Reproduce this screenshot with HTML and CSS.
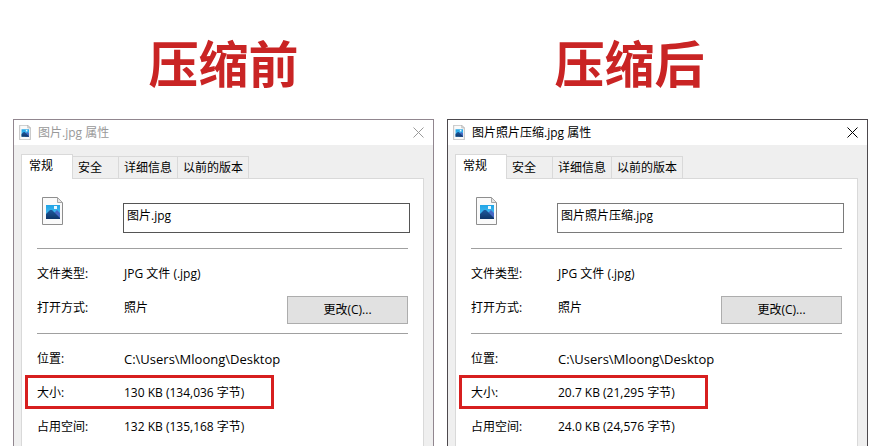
FILE: index.html
```html
<!DOCTYPE html>
<html lang="zh-CN">

<head>
    <meta charset="UTF-8">
    <meta name="viewport" content="width=device-width, initial-scale=1.0">
    <title>压缩前 / 压缩后</title>
    <link rel="stylesheet" href="styles.css">
</head>

<body>
    <!-- shared icons -->
    <svg class="sprite" aria-hidden="true">
        <defs>
            <linearGradient id="sky" x1="0" y1="0" x2="0" y2="1">
                <stop offset="0" stop-color="#1fa4e6" />
                <stop offset="1" stop-color="#5cc6f5" />
            </linearGradient>
            <linearGradient id="hill" x1="0" y1="0" x2="0" y2="1">
                <stop offset="0" stop-color="#1d5a9e" />
                <stop offset="1" stop-color="#0f3568" />
            </linearGradient>
        </defs>
        <symbol id="jpg-icon" viewBox="0 0 21 28">
            <path d="M.5 .5H15.500L20.500 5.500V27.500H.5Z" fill="#fafafa" stroke="#8e8e8e" />
            <path d="M15.500 .5V5.500H20.500Z" fill="#e4e4e4" stroke="#a6a6a6" />
            <rect x="4" y="8" width="14" height="14" fill="url(#sky)" />
            <path d="M11 17L15 13L18 16V22H11Z" fill="#4668c4" />
            <path d="M4 17L8 13L10 13L18 21V22H4Z" fill="url(#hill)" />
            <rect x="12" y="9" width="3" height="3" fill="#e8f7ff" />
        </symbol>
        <symbol id="close-icon" viewBox="0 0 11 11">
            <path d="M.5 .5L10.500 10.500M10.500 .5L.5 10.500" fill="none" stroke="currentColor" />
        </symbol>
    </svg>

    <main class="compare">
        <section class="side">
            <h1 class="side_title">压缩前</h1>
            <div class="window inactive">
                <header class="titlebar">
                    <svg class="file_small"><use href="#jpg-icon" /></svg>
                    <span class="title_text">图片.jpg 属性</span>
                    <button type="button" class="close" aria-label="关闭"><svg><use href="#close-icon" /></svg></button>
                </header>
                <div class="tabs" role="tablist">
                    <button type="button" class="tab active" role="tab" aria-selected="true">常规</button>
                    <button type="button" class="tab" role="tab">安全</button>
                    <button type="button" class="tab" role="tab">详细信息</button>
                    <button type="button" class="tab" role="tab">以前的版本</button>
                </div>
                <div class="panel">
                    <div class="file_head">
                        <label for="name-before" aria-label="文件名"><svg class="file_big"><use href="#jpg-icon" /></svg></label>
                        <input type="text" class="file_name" id="name-before" value="图片.jpg">
                    </div>
                    <hr>
                    <div class="row"><span>文件类型:</span><span>JPG 文件 (.jpg)</span></div>
                    <div class="row">
                        <span>打开方式:</span><span>照片</span>
                        <button type="button" class="change">更改(C)...</button>
                    </div>
                    <hr>
                    <div class="row"><span>位置:</span><span class="path">C:\Users\Mloong\Desktop</span></div>
                    <div class="row marked"><span>大小:</span><span>130 KB (134,036 字节)</span></div>
                    <div class="row"><span>占用空间:</span><span>132 KB (135,168 字节)</span></div>
                </div>
            </div>
        </section>

        <section class="side after">
            <h1 class="side_title">压缩后</h1>
            <div class="window">
                <header class="titlebar">
                    <svg class="file_small"><use href="#jpg-icon" /></svg>
                    <span class="title_text">图片照片压缩.jpg 属性</span>
                    <button type="button" class="close" aria-label="关闭"><svg><use href="#close-icon" /></svg></button>
                </header>
                <div class="tabs" role="tablist">
                    <button type="button" class="tab active" role="tab" aria-selected="true">常规</button>
                    <button type="button" class="tab" role="tab">安全</button>
                    <button type="button" class="tab" role="tab">详细信息</button>
                    <button type="button" class="tab" role="tab">以前的版本</button>
                </div>
                <div class="panel">
                    <div class="file_head">
                        <label for="name-after" aria-label="文件名"><svg class="file_big"><use href="#jpg-icon" /></svg></label>
                        <input type="text" class="file_name" id="name-after" value="图片照片压缩.jpg">
                    </div>
                    <hr>
                    <div class="row"><span>文件类型:</span><span>JPG 文件 (.jpg)</span></div>
                    <div class="row">
                        <span>打开方式:</span><span>照片</span>
                        <button type="button" class="change">更改(C)...</button>
                    </div>
                    <hr>
                    <div class="row"><span>位置:</span><span class="path">C:\Users\Mloong\Desktop</span></div>
                    <div class="row marked"><span>大小:</span><span>20.7 KB (21,295 字节)</span></div>
                    <div class="row"><span>占用空间:</span><span>24.0 KB (24,576 字节)</span></div>
                </div>
            </div>
        </section>
    </main>
</body>

</html>
```
FILE: styles.css
```css
* {
    box-sizing: border-box;
}

body {
    margin: 0;
    background: #fff;
    color: #000;
    font: 12px/16px "Open Sans", "Noto Sans CJK SC", sans-serif;
}

button,
input {
    font: inherit;
    color: inherit;
    border-radius: 0;
}

.sprite {
    display: block;
    width: 0;
    height: 0;
}

.compare {
    display: grid;
    grid-template-columns: 1fr 1fr;
    gap: 13px;
    padding: 0 13px;
    min-height: 100vh;
}

.side {
    display: flex;
    flex-direction: column;
}

.side_title {
    margin: 0;
    padding-top: 31px;
    height: 119px;
    color: #c92424;
    font-family: "Noto Sans CJK SC", sans-serif;
    font-size: 50px;
    font-weight: 700;
    line-height: 60px;
    text-align: center;
}

.after .side_title {
    padding-right: 56px;
}

.window {
    flex: 1;
    display: flex;
    flex-direction: column;
    border: 1px solid #4d494d;
    border-bottom: 0;
    background: #efefef;
}

.inactive {
    border-color: #91868f;
}

/* title bar */
.titlebar {
    display: flex;
    align-items: center;
    height: 25px;
    padding: 0 9px 0 5px;
    background: #fff;
}

.inactive .titlebar {
    color: #999;
}

.file_small {
    width: 12px;
    height: 15px;
}

.title_text {
    flex: 1;
    padding-left: 7px;
}

.close {
    padding: 0;
    border: 0;
    background: none;
}

.close svg {
    display: block;
    width: 11px;
    height: 11px;
}

/* tabs */
.tabs {
    display: flex;
    align-items: flex-end;
    margin-top: 9px;
    padding-left: 7px;
}

.tab {
    height: 22px;
    min-width: 46px;
    padding: 0 5px;
    border: 1px solid #d9d9d9;
    border-width: 1px 1px 0 0;
    background: #efefef;
    text-align: left;
}

.tab.active {
    z-index: 1;
    width: 52px;
    height: 25px;
    margin-bottom: -1px;
    padding: 0 7px 2px;
    border-left-width: 1px;
    background: #fff;
}

.panel {
    flex: 1;
    margin: 0 9px 0 7px;
    padding: 18px 15px 0;
    border: 1px solid #d9d9d9;
    border-bottom: 0;
    background: #fff;
}

.file_head {
    display: grid;
    grid-template-columns: 87px 1fr;
    align-items: start;
}

.file_big {
    display: block;
    width: 21px;
    height: 28px;
    margin-left: 5px;
}

.file_name {
    height: 30px;
    margin: 6px -2px 0 -1px;
    padding: 0 3px 7px;
    border: 1px solid #7a7a7a;
    background: #fff;
}

.inactive .file_name {
    border-color: #555;
}

hr {
    margin: 9px 0 7px;
    border: 0;
    border-top: 1px solid #a0a0a0;
}

.file_head + hr {
    margin-top: 15px;
}

.row {
    display: grid;
    grid-template-columns: 87px 1fr auto;
    align-items: center;
    height: 34px;
    padding-top: 2px;
}

.path {
    font-size: 13px;
}

.change {
    width: 121px;
    height: 28px;
    align-self: end;
    border: 1px solid #adadad;
    background: #e1e1e1;
}

/* red frame round the size */
.marked {
    width: 249px;
    margin-left: -12px;
    padding-left: 9px;
    border: 3px solid #d71f1f;
}
```
